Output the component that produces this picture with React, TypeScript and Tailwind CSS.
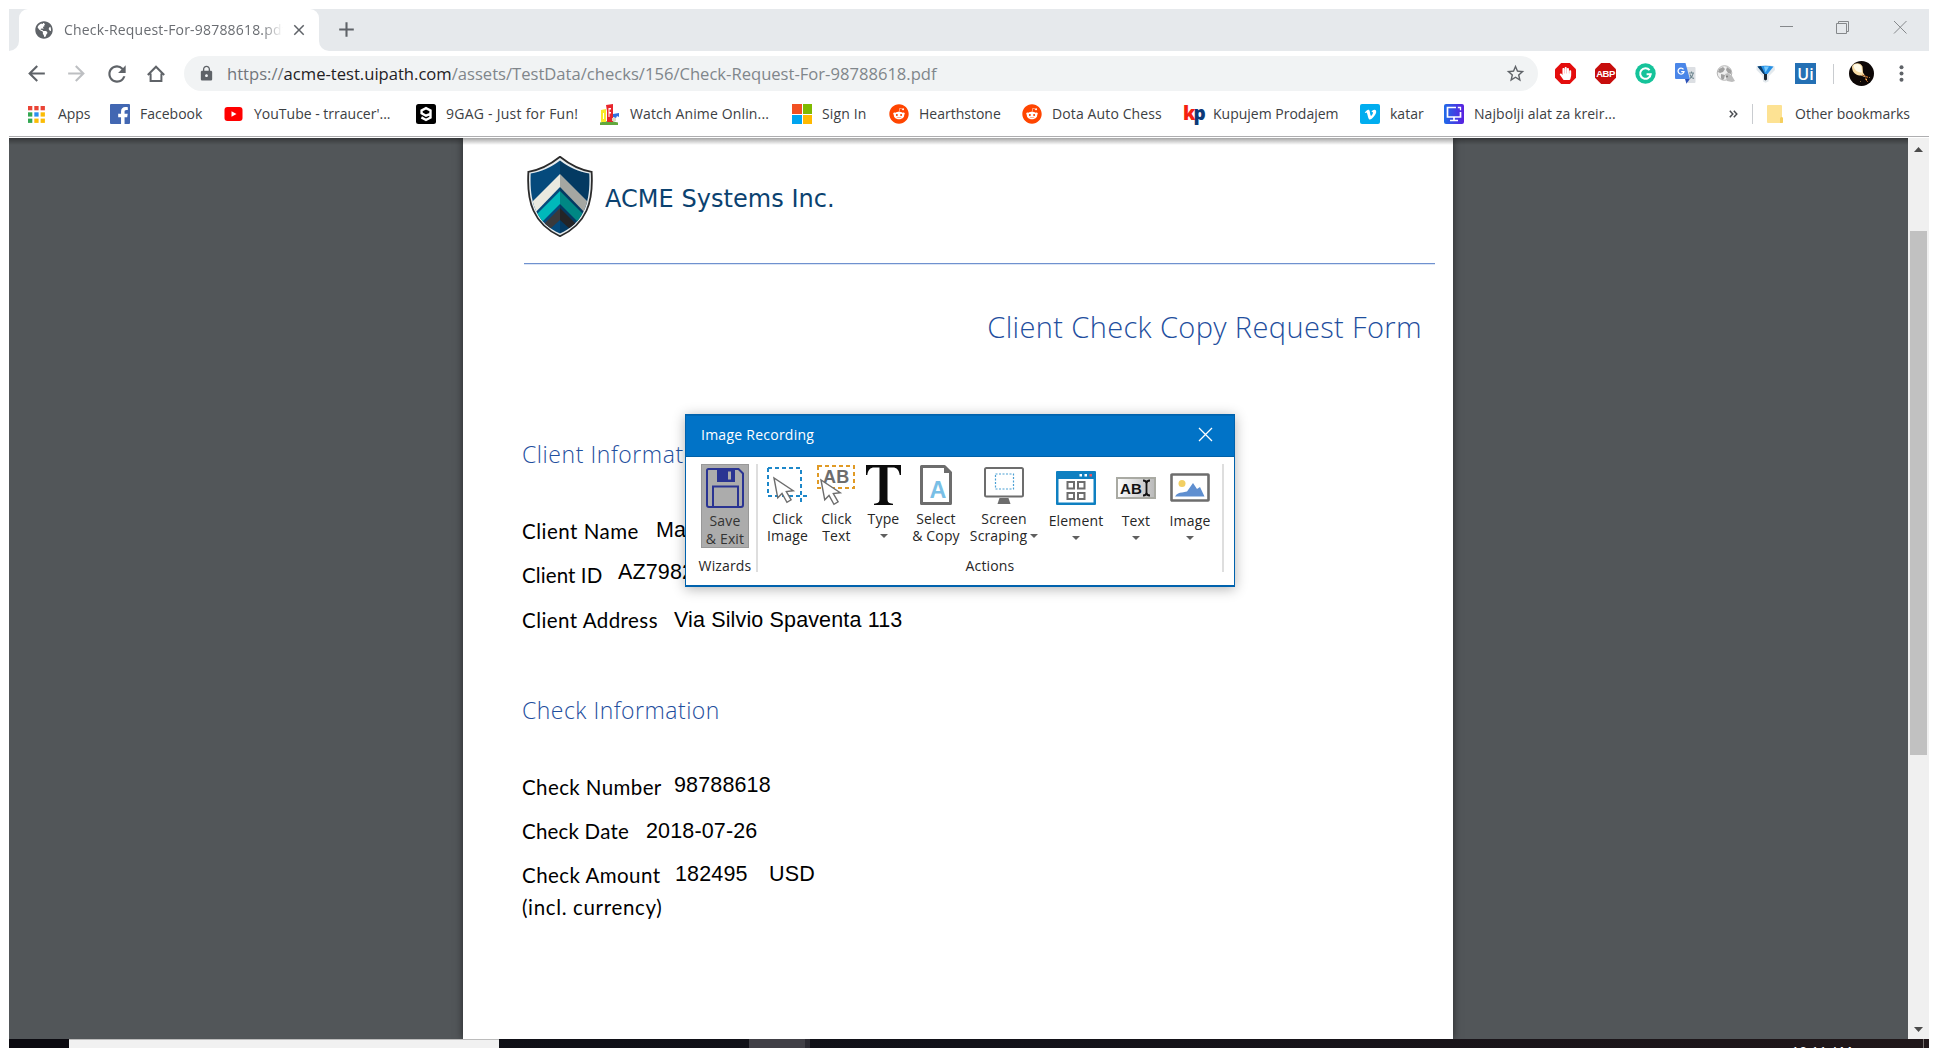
import type { ReactNode } from 'react';
import { MdAdd, MdArrowBack, MdArrowForward, MdClose, MdLock, MdRefresh, MdStarBorder } from 'react-icons/md';
import { FaFacebookF, FaGlobeAmericas, FaHandPaper, FaReddit, FaVimeoV } from 'react-icons/fa';

/* ---------- Tab strip ---------- */

function TabStrip() {
  return (
    <div className="flex h-[42px] shrink-0 bg-[#e6e9ec]">
      <div className="w-[10px] bg-white">
        <div className="h-full rounded-br-[10px] bg-[#e6e9ec]" />
      </div>
      <div className="flex w-[300px] items-center rounded-t-[9px] bg-white pb-px pl-[16px] text-[14px] tracking-[0.190px] text-[#6a6d72]">
        <span className="flex w-[29px]">
          <FaGlobeAmericas className="h-[18px] w-[18px] text-[#5f6368]" />
        </span>
        <span className="w-[219px] overflow-hidden pb-px whitespace-nowrap [mask-image:linear-gradient(to_right,black_90%,transparent)]">
          Check-Request-For-98788618.pdf
        </span>
        <MdClose className="ml-[7px] h-[18px] w-[18px] text-[#5f6368]" />
      </div>
      <div className="w-[10px] bg-white">
        <div className="h-full rounded-bl-[10px] bg-[#e6e9ec]" />
      </div>
      <div className="flex w-[35px] items-center justify-center pb-px">
        <MdAdd className="h-[25px] w-[25px] text-[#5f6368]" />
      </div>
      <svg className="mt-[11px] mr-[22px] ml-auto h-[15px] w-[128px]" viewBox="0 0 128 15" fill="none" stroke="#85888b" strokeWidth="1">
        <path d="M1 6.500h13" />
        <path d="M57.500 3.500h10v10h-10zM59.500 3.500v-2h10v10h-2" />
        <path d="M115 1l12.500 12.500M127.500 1L115 13.500" />
      </svg>
    </div>
  );
}

/* ---------- Address bar ---------- */

const octagon = 'M6.200 0h8.600L21 6.200v8.600L14.800 21H6.200L0 14.800V6.200z';

function Extensions() {
  return (
    <div className="flex items-center">
      <span className="relative flex h-[21px] w-[21px] items-center justify-center">
        <svg className="absolute inset-0" width="21" height="21" viewBox="0 0 21 21">
          <path d={octagon} fill="#e40d0d" />
        </svg>
        <FaHandPaper className="relative h-[13px] w-[13px] text-white" />
      </span>
      <span className="relative ml-[19px] flex h-[21px] w-[21px] items-center justify-center">
        <svg className="absolute inset-0" width="21" height="21" viewBox="0 0 21 21">
          <path d={octagon} fill="#c70d0c" />
        </svg>
        <span className="relative font-['Liberation_Sans'] text-[9.500px] leading-none font-bold tracking-[-0.500px] text-white">ABP</span>
      </span>
      <svg className="ml-[19px]" width="21" height="21" viewBox="0 0 21 21">
        <circle cx="10.500" cy="10.500" r="10.200" fill="#15c39a" />
        <path d="M14.600 7.200A5.300 5.300 0 1 0 15.700 11.300H11.600" fill="none" stroke="#fff" strokeWidth="2" />
        <path d="M15.900 10.300v4.200l-2-1.400z" fill="#fff" />
      </svg>
      <svg className="ml-[19px]" width="21" height="21" viewBox="0 0 21 21">
        <path d="M8 4h11.500a1 1 0 0 1 1 1v14a1 1 0 0 1-1 1H13z" fill="#dcdfe3" />
        <path d="M14 10h5M16.500 8.500V10M18.300 10c-.5 2.500-1.800 4.500-3.500 5.500M15 11.500c.6 2 2 3.500 4 4" fill="none" stroke="#6f8790" strokeWidth="1.100" />
        <path d="M1 0h9.500l4.300 16H1a1 1 0 0 1-1-1V1a1 1 0 0 1 1-1z" fill="#4a86e8" />
        <path d="M10 16h4.800l-3.300 4.800z" fill="#2b50b8" />
        <path d="M8.500 6.300A3 3 0 1 0 9 8.600H6.200" fill="none" stroke="#fff" strokeWidth="1.300" />
      </svg>
      <svg className="ml-[20px]" width="20" height="18" viewBox="0 0 20 18">
        <circle cx="8.500" cy="8" r="7.300" fill="#efefef" stroke="#b5b5b5" />
        <path d="M3 4l4-2 2 2-2 3-3 1-2-1zM5 9l4 1-1 4-2 1-1-2zM11 2l4 3v4l-3-1-2-3z" fill="#a0a0a0" />
        <path d="M9 9l3-1 4 3 3 5-3 1-5-1z" fill="#bdbdbd" />
        <circle cx="11" cy="11.500" r="1.100" fill="#808080" />
      </svg>
      <svg className="ml-[20px]" width="20" height="19" viewBox="0 0 20 19">
        <path d="M.5 2.500Q9.500 0 18.500 2.500l.5 3.500-6 6-.5 5.500-3 1.200-2.500-1.200-.5-5.500-6-6z" fill="#e3e9ed" />
        <path d="M1.500 2.500Q9.500 1 17.500 2.500l-6 7.500h-4z" fill="#2590e6" />
        <path d="M1.500 2.500l6 7.500H9L5 2z" fill="#0d3b66" />
        <path d="M8 10h3v5.500l-1.500 1L8 15.500z" fill="#1a2733" />
        <path d="M8 2.500h5l-3.500 6z" fill="#79ccfd" />
      </svg>
      <span className="ml-[19px] flex h-[21px] w-[21px] items-center justify-center bg-[#2470b4] text-[16px] leading-none font-semibold text-white">
        Ui
      </span>
    </div>
  );
}

function AddressBar() {
  return (
    <div className="flex h-[45px] shrink-0 items-center bg-white pl-[15px] text-[#5f6368]">
      <MdArrowBack className="h-[25px] w-[25px]" />
      <MdArrowForward className="ml-[15px] h-[25px] w-[25px] text-[#bdbfc2]" />
      <MdRefresh className="ml-[15px] h-[26px] w-[26px]" />
      <svg className="ml-[17px]" width="18" height="18" viewBox="0 0 18 18" fill="none" stroke="#5f6368" strokeWidth="2">
        <path d="M.8 10L9 1.700 17.200 10M3.600 8.500V16h10.800V8.500" />
      </svg>
      <div className="ml-[19px] flex h-[35px] w-[1354px] items-center rounded-full bg-[#f1f3f4] pl-[14px]">
        <MdLock className="h-[17px] w-[17px]" />
        <p className="ml-[12px] text-[16.600px] leading-[24px] whitespace-nowrap text-[#80868b]">
          <span className="text-[#72767b]">https://</span>
          <span className="text-[#1f2124]">acme-test.uipath.com</span>/assets/TestData/checks/156/Check-Request-For-98788618.pdf
        </p>
        <MdStarBorder className="mr-[12px] ml-auto h-[21px] w-[21px]" />
      </div>
      <div className="ml-[17px]">
        <Extensions />
      </div>
      <div className="ml-[17px] h-[20px] w-px bg-[#c9ccd0]" />
      <svg className="ml-[15px]" width="25" height="25" viewBox="0 0 25 25">
        <circle cx="12.500" cy="12.500" r="12.500" fill="#0d0706" />
        <path d="M3.500 4.500C6 1 12 1.500 13.500 5.500l.5 6 3 5-5-2c-4 0-7.500-2-8.500-5.500-.4-2-.8-3 0-4.500z" fill="#f7dba4" />
        <path d="M4.500 4.500c3-2.500 7-1.500 8 2l.5 5c-4 0-7-2-8-5z" fill="#fffbe9" />
        <path d="M13 14l6 2-3 2 3 3" fill="none" stroke="#a35a20" strokeWidth="1" />
        <path d="M17 18l1 1M20 16l.6.6M11 20l.5.500" stroke="#f3c46b" />
      </svg>
      <svg className="ml-[25px]" width="5" height="17" viewBox="0 0 5 17" fill="#5f6368">
        <circle cx="2.500" cy="2.200" r="2" />
        <circle cx="2.500" cy="8.500" r="2" />
        <circle cx="2.500" cy="14.800" r="2" />
      </svg>
    </div>
  );
}

/* ---------- Bookmarks bar ---------- */

function Bookmark({ icon, box, children }: { icon: ReactNode; box: string; children: ReactNode }) {
  return (
    <div className={`flex shrink-0 items-center ${box}`}>
      <span className="flex w-[30px] shrink-0">{icon}</span>
      <span className="whitespace-nowrap">{children}</span>
    </div>
  );
}

const appColors = ['#ea4335', '#ea4335', '#ea4335', '#34a853', '#2a8ff0', '#fbbc05', '#34a853', '#fbbc05', '#fbbc05'];

function AppsIcon() {
  return (
    <svg width="17" height="17" viewBox="0 0 17 17">
      {appColors.map((c, i) => (
        <rect key={i} x={(i % 3) * 6.300} y={Math.floor(i / 3) * 6.300} width="4.300" height="4.300" fill={c} />
      ))}
    </svg>
  );
}

function RedditIcon() {
  return <FaReddit className="h-[20px] w-[20px] text-[#ff4500]" />;
}

function BookmarksBar() {
  return (
    <div className="flex h-[40px] shrink-0 items-center bg-white pb-[4px] pl-[19px] text-[14px] leading-[20px] text-[#3c4043]">
      <Bookmark box="w-[82px] tracking-[-0.100px]" icon={<AppsIcon />}>Apps</Bookmark>
      <Bookmark
        box="w-[115px]"
        icon={
          <span className="flex h-[20px] w-[20px] items-end justify-end rounded-[1px] bg-[#4267b2]">
            <FaFacebookF className="mr-px -mb-px h-[18px] w-[12px] text-white" />
          </span>
        }
      >
        Facebook
      </Bookmark>
      <Bookmark
        box="w-[192px] -ml-px"
        icon={
          <svg width="19" height="14" viewBox="0 0 19 14">
            <rect x=".5" width="18" height="14" rx="3" fill="#f00" />
            <path d="M7.500 4.200l5 2.800-5 2.800z" fill="#fff" />
          </svg>
        }
      >
        YouTube - trraucer'...
      </Bookmark>
      <Bookmark
        box="w-[184px] tracking-[0.250px]"
        icon={
          <svg width="20" height="20" viewBox="0 0 20 20">
            <rect width="20" height="20" rx="2.500" fill="#000" />
            <path d="M14.500 9.800L10 11.700 5.600 9.300V6.400L10 4.200l4.500 2.200v7.200L10 16l-4.600-2.600" fill="none" stroke="#fff" strokeWidth="2.400" />
            <path d="M10 6.800l1.700.9-1.700.9-1.700-.9z" fill="#000" />
          </svg>
        }
      >
        9GAG - Just for Fun!
      </Bookmark>
      <Bookmark
        box="w-[192px] tracking-[0.140px]"
        icon={
          <svg width="20" height="21" viewBox="0 0 20 21">
            <path d="M0 18.500q9-3 18 0V21H0z" fill="#62a83c" />
            <path d="M1 6l5-1v13H1z" fill="#f8ea2a" />
            <path d="M3 9h1v6H3z" fill="#fff" />
            <path d="M6 1l7-1v18H7V7z" fill="#e8262c" />
            <path d="M8.500 4H11v1.500H9.500V8H11v1.500H9.500V13h-1z" fill="#fff" />
            <path d="M13 10l6-1v4l-2-1-1 2-3-1z" fill="#2f6fdf" />
            <path d="M12 14h4v3h-4z" fill="#ded9c4" />
          </svg>
        }
      >
        Watch Anime Onlin...
      </Bookmark>
      <Bookmark
        box="w-[97px] tracking-[0.150px]"
        icon={
          <span className="grid h-[20px] w-[20px] grid-cols-2 gap-px">
            <i className="bg-[#f25022]" />
            <i className="bg-[#7fba00]" />
            <i className="bg-[#00a4ef]" />
            <i className="bg-[#ffb900]" />
          </span>
        }
      >
        Sign In
      </Bookmark>
      <Bookmark box="w-[133px]" icon={<RedditIcon />}>Hearthstone</Bookmark>
      <Bookmark box="w-[161px] tracking-[0.120px]" icon={<RedditIcon />}>Dota Auto Chess</Bookmark>
      <Bookmark
        box="w-[177px]"
        icon={
          <span className="flex h-[20px] items-center pb-[2px] font-['Open_Sans'] text-[19px] leading-none font-extrabold tracking-[-2px]">
            <span className="text-[#f5210f]">k</span>
            <span className="text-[#0d3a78]">p</span>
          </span>
        }
      >
        Kupujem Prodajem
      </Bookmark>
      <Bookmark
        box="w-[84px]"
        icon={
          <span className="flex h-[20px] w-[20px] items-center justify-center rounded-[2px] bg-[#00adef]">
            <FaVimeoV className="h-[13px] w-[13px] text-white" />
          </span>
        }
      >
        katar
      </Bookmark>
      <Bookmark
        box="w-[285px] tracking-[0.070px]"
        icon={
          <svg width="20" height="20" viewBox="0 0 20 20">
            <defs>
              <linearGradient id="screen-app" x1="0" x2="1">
                <stop offset="0" stopColor="#1f6be8" />
                <stop offset="1" stopColor="#5a20e0" />
              </linearGradient>
            </defs>
            <rect width="20" height="20" rx="2" fill="url(#screen-app)" />
            <path d="M12 3.500H3.500V13h13V8M10 13v3M6 16.500h8" fill="none" stroke="#fff" strokeWidth="1.700" />
            <path d="M13.800 3.500h2.700v2.700" fill="none" stroke="#fff" strokeWidth="1.300" />
          </svg>
        }
      >
        Najbolji alat za kreir...
      </Bookmark>
      <svg width="9" height="8" viewBox="0 0 9 8" fill="none" stroke="#4a4d51" strokeWidth="1.500">
        <path d="M.8.800L3.800 4l-3 3.200M4.800.800L7.800 4l-3 3.200" />
      </svg>
      <div className="ml-[14px] h-[20px] w-px bg-[#c9ccd0]" />
      <svg className="ml-[14px]" width="16" height="18" viewBox="0 0 16 18">
        <path d="M1 0h13a1 1 0 0 1 1 1v11l1 1.500V17a1 1 0 0 1-1 1H1a1 1 0 0 1-1-1V1a1 1 0 0 1 1-1z" fill="#fde293" />
        <path d="M15 12c-2 0-2 1-2 2.500V18h2a1 1 0 0 0 1-1v-4z" fill="#f5cf5e" />
      </svg>
      <span className="ml-[12px] whitespace-nowrap">Other bookmarks</span>
    </div>
  );
}

/* ---------- PDF page ---------- */

function ShieldLogo() {
  return (
    <svg width="66" height="81" viewBox="0 0 66 81">
      <defs>
        <clipPath id="shield-inner">
          <path d="M33 4.500C42 11.500 52 16 62.300 17.500 63.500 45 58 66 33 77.500 8 66 2.500 45 3.700 17.500 14 16 24 11.500 33 4.500z" />
        </clipPath>
      </defs>
      <path d="M33 .8C42 8 52 14 64.600 15.800 66.500 46 59.500 68 33 80.200 6.500 68-.5 46 1.400 15.800 14 14 24 8 33 .8z" fill="#e6ecef" stroke="#2b2b2b" strokeWidth="1.800" />
      <g clipPath="url(#shield-inner)">
        <path d="M0 0h33v81H0z" fill="#054a7c" />
        <path d="M33 0h33v81H33z" fill="#043a62" />
        <path d="M33 18v13L0 65V51z" fill="#e9e9df" />
        <path d="M33 18v13l33 34V51z" fill="#a5a7a2" />
        <path d="M33 35v13L0 81V68z" fill="#00b8bb" />
        <path d="M33 35v13l33 33V68z" fill="#008784" />
        <path d="M33 52v12L12 83V73z" fill="#3a3a3c" />
        <path d="M33 52v12l21 19V73z" fill="#242426" />
      </g>
    </svg>
  );
}

function Field({ label, labelBox, raise, children }: { label: string; labelBox: string; raise: string; children: ReactNode }) {
  return (
    <div className="flex h-[44.300px] whitespace-nowrap">
      <span className={`font-['Lato'] text-[20.500px] leading-[26px] ${labelBox}`}>{label}</span>
      <span className={`font-['Liberation_Sans'] text-[21.500px] leading-[26px] tracking-[0.140px] ${raise}`}>{children}</span>
    </div>
  );
}

function PdfPage() {
  return (
    <div className="flex w-[990px] shrink-0 flex-col bg-white pr-[18px] pl-[59px] text-black shadow-[0_0_8px_rgba(0,0,0,0.550)]">
      <div className="mt-[18px] ml-[5px] flex h-[81px]">
        <ShieldLogo />
        <span className="mt-[28px] ml-[12px] font-['DejaVu_Sans'] text-[24px] leading-[30px] tracking-[0.040px] whitespace-nowrap text-[#0b4270]">
          ACME Systems Inc.
        </span>
      </div>
      <div className="mt-[26px] ml-[2px] h-[2px] border-t border-[#6f91cf] bg-[#dbe5f5]" />
      <h1 className="mt-[42px] mr-[13px] text-right text-[29px] leading-[40px] font-light tracking-[0.370px] text-[#1f4f9e]">
        Client Check Copy Request Form
      </h1>
      <h2 className="mt-[92px] text-[23px] leading-[30px] font-light tracking-[0.550px] text-[#1f4f9e]">
        Client Information
      </h2>
      <div className="mt-[49px]">
        <Field label="Client Name" labelBox="w-[134px] tracking-[0.500px]" raise="-mt-px">Mario</Field>
        <Field label="Client ID" labelBox="w-[96px] tracking-[0.100px]" raise="-mt-[3px]">AZ7982</Field>
        <Field label="Client Address" labelBox="w-[152px] tracking-[0.450px]" raise="mt-0">Via Silvio Spaventa 113</Field>
      </div>
      <h2 className="mt-[44px] text-[23px] leading-[30px] font-light tracking-[0.480px] text-[#1f4f9e]">
        Check Information
      </h2>
      <div className="mt-[49px]">
        <Field label="Check Number" labelBox="w-[152px] tracking-[0.400px]" raise="-mt-[2px]">98788618</Field>
        <Field label="Check Date" labelBox="w-[124px] tracking-[0.200px]" raise="mt-0">2018-07-26</Field>
        <Field label="Check Amount" labelBox="w-[153px] tracking-[0.450px]" raise="-mt-px">
          <span className="inline-block w-[94px]">182495</span>USD
        </Field>
        <p className="-mt-[13px] font-['Lato'] text-[20.500px] leading-[26px] tracking-[0.650px]">(incl. currency)</p>
      </div>
    </div>
  );
}

/* ---------- Image Recording dialog ---------- */

const cursorPath = 'M0 0l3.500 18.500 4-4 4.600 8.200 3.900-2.300-4.500-7.700 6.500-.8z';

function DownArrow() {
  return <span className="h-0 w-0 border-x-[4px] border-t-[4px] border-x-transparent border-t-[#5f5f5f]" />;
}

function Tool({ box, icon, iconPad, lines, arrow, low }: { box: string; icon: ReactNode; iconPad: string; lines: string[]; arrow?: 'below' | 'side'; low?: boolean }) {
  return (
    <div className={`flex shrink-0 flex-col items-center leading-[17px] whitespace-nowrap ${box}`}>
      <div className={`flex justify-center ${low ? 'h-[48px]' : 'h-[46px]'} ${iconPad}`}>{icon}</div>
      <span>{lines[0]}</span>
      {arrow === 'below' ? (
        <span className="mt-[7px] flex">
          <DownArrow />
        </span>
      ) : (
        <span className="flex items-center gap-[3px]">
          {lines[1]}
          {arrow === 'side' && <DownArrow />}
        </span>
      )}
    </div>
  );
}

function RecordingDialog() {
  return (
    <div className="absolute top-[276px] left-[676px] flex h-[173px] w-[550px] flex-col border border-b-2 border-[#0062ad] bg-white text-[14px] tracking-[0.150px] text-[#262626] shadow-[0_2px_12px_rgba(0,0,0,0.300)]">
      <div className="flex h-[42px] shrink-0 items-center justify-between border-t border-b border-t-[#0068b5] border-b-[#0061a8] bg-[#0173c7] pr-[21px] pl-[15px] tracking-[0.250px] text-white">
        <span className="-mt-[3px]">Image Recording</span>
        <svg className="-mt-[3px]" width="15" height="15" viewBox="0 0 15 15" stroke="#fff" strokeWidth="1.300">
          <path d="M1 1l13 13M14 1L1 14" />
        </svg>
      </div>
      <div className="flex pt-[7px]">
        <div className="flex w-[70px] flex-col items-center pl-[8px]">
          <div className="flex h-[84px] w-[48px] flex-col items-center border border-[#989898] bg-[#acacac] pt-[3px] leading-[18px] whitespace-nowrap text-[#333]">
            <svg className="shrink-0" width="38" height="40" viewBox="0 0 38 40">
              <path d="M2.500 1h30L37 5.500V37a2 2 0 0 1-2 2H3a2 2 0 0 1-2-2V2.500A1.500 1.500 0 0 1 2.500 1z" fill="none" stroke="#2a3492" strokeWidth="2" />
              <path d="M11 1h18v13H11z" fill="#2a3492" />
              <path d="M22 3.500h3v8h-3z" fill="#acacac" />
              <path d="M7 39V18.500h25V39" fill="none" stroke="#2a3492" strokeWidth="2" />
            </svg>
            <span className="mt-[4px]">Save</span>
            <span>&amp; Exit</span>
          </div>
          <span className="mt-[9px] leading-[17px]">Wizards</span>
        </div>
        <div className="h-[108px] w-[2px] bg-[#dedede]" />
        <div className="flex h-[110px] w-[464px] flex-col items-center">
          <div className="flex w-full pl-[5px]">
            <Tool
              box="w-[49px]"
              iconPad="pt-[3px]"
              lines={['Click', 'Image']}
              icon={
                <svg width="41" height="39" viewBox="0 0 41 39">
                  <path d="M1 1h33v37M1 1v28h40" fill="none" stroke="#1d87c9" strokeWidth="2" strokeDasharray="4 3" />
                  <path d={cursorPath} transform="translate(7 11) scale(1.070)" fill="#fff" stroke="#6d6d6d" strokeWidth="1.300" />
                </svg>
              }
            />
            <Tool
              box="w-[49px]"
              iconPad="pt-px"
              lines={['Click', 'Text']}
              icon={
                <svg width="40" height="41" viewBox="0 0 40 41">
                  <rect x="1" y="1" width="36" height="22" fill="none" stroke="#e09a25" strokeWidth="2" strokeDasharray="4 3" />
                  <text x="6" y="18" fontFamily="Liberation Sans" fontWeight="700" fontSize="18" fill="#6d6d6d">AB</text>
                  <path d={cursorPath} transform="translate(4 15) scale(1.070)" fill="#fff" stroke="#6d6d6d" strokeWidth="1.300" />
                </svg>
              }
            />
            <Tool
              box="w-[45px]"
              iconPad="pt-px"
              arrow="below"
              lines={['Type']}
              icon={
                <svg width="35" height="41" viewBox="0 0 35 41">
                  <path d="M0 0h35v10h-1.300C33 5 31 2.500 26.500 2.500H21.500V34c0 3.500 1.500 4.500 5.500 4.700V40H8v-1.300c4-.2 5.500-1.200 5.500-4.700V2.500H8.500C4 2.500 2 5 1.300 10H0z" fill="#0b0b0b" />
                </svg>
              }
            />
            <Tool
              box="w-[60px]"
              iconPad="pt-px"
              lines={['Select', '& Copy']}
              icon={
                <svg width="32" height="41" viewBox="0 0 32 41">
                  <path d="M1.500 1.500h23l6 6v31h-29z" fill="#fff" stroke="#6d6d6d" strokeWidth="3" strokeLinejoin="round" />
                  <path d="M24 1v7h7z" fill="#6d6d6d" />
                  <text x="9.500" y="33" fontFamily="Liberation Sans" fontWeight="700" fontSize="24" textLength="17" lengthAdjust="spacingAndGlyphs" fill="#79bfe6">A</text>
                </svg>
              }
            />
            <Tool
              box="w-[76px]"
              iconPad="pt-[3px]"
              arrow="side"
              lines={['Screen', 'Scraping']}
              icon={
                <svg width="40" height="38" viewBox="0 0 40 38">
                  <rect x="1" y="1" width="38" height="28.500" rx="1.500" fill="#fff" stroke="#6d6d6d" strokeWidth="2" />
                  <path d="M15.500 31h9l2 6h-13z" fill="#6d6d6d" />
                  <rect x="11.500" y="7" width="18" height="15" fill="none" stroke="#4a9fd4" strokeWidth="1.200" strokeDasharray="2 1.500" />
                </svg>
              }
            />
            <Tool
              box="w-[68px]"
              iconPad="pt-[7px]"
              arrow="below"
              low
              lines={['Element']}
              icon={
                <svg width="40" height="34" viewBox="0 0 40 34">
                  <rect width="40" height="34" rx="1" fill="#0f80c1" />
                  <path d="M2.500 8h35v23.500h-35z" fill="#fff" />
                  <path d="M23.500 3h2.500v2.500h-2.500zM28.500 3H31v2.500h-2.500z" fill="#fff" />
                  <path d="M33.500 3H36v2.500h-2.500z" fill="#f0545c" />
                  <path d="M11.500 11h6.500v6.500h-6.500zM22 11h6.500v6.500H22zM11.500 22H18v6h-6.500zM22 22h6.500v6H22z" fill="#fff" stroke="#6d6d6d" strokeWidth="2" />
                </svg>
              }
            />
            <Tool
              box="w-[52px]"
              iconPad="pt-[13px]"
              arrow="below"
              low
              lines={['Text']}
              icon={
                <svg width="40" height="22" viewBox="0 0 40 22">
                  <defs>
                    <linearGradient id="text-field" x1="0" x2="1">
                      <stop offset="0" stopColor="#fff" />
                      <stop offset="1" stopColor="#b9b9b9" />
                    </linearGradient>
                  </defs>
                  <rect x="1" y="1" width="38" height="20" fill="url(#text-field)" stroke="#a9aaa3" strokeWidth="2" />
                  <text x="4" y="16.500" fontFamily="Liberation Sans" fontWeight="700" fontSize="15" fill="#111">AB</text>
                  <path d="M27 3.500q3.500 0 3.500 3v9q0 3-3.500 3M34 3.500q-3.500 0-3.500 3v9q0 3 3.500 3" fill="none" stroke="#111" strokeWidth="1.800" />
                </svg>
              }
            />
            <Tool
              box="w-[56px]"
              iconPad="pt-[9px]"
              arrow="below"
              low
              lines={['Image']}
              icon={
                <svg width="40" height="29" viewBox="0 0 40 29">
                  <rect x="1.500" y="1.500" width="37" height="26" rx=".5" fill="#fff" stroke="#6d6d6d" strokeWidth="2.600" />
                  <circle cx="12" cy="10.500" r="3.500" fill="#f2cf63" />
                  <path d="M5 23.500c2-3 4-4 7-4 2 0 3-1 5-1l6-8.500 4 6 3-2 4.500 9.500z" fill="#5f8fd0" />
                </svg>
              }
            />
          </div>
          <span className="mt-auto leading-[17px]">Actions</span>
        </div>
        <div className="h-[108px] w-[2px] bg-[#dedede]" />
      </div>
    </div>
  );
}

/* ---------- Viewer ---------- */

function Scrollbar() {
  return (
    <div className="flex w-[21px] shrink-0 flex-col items-center bg-[#f0f0f0]">
      <svg className="mt-[9px]" width="9" height="5" viewBox="0 0 9 5">
        <path d="M0 5L4.500 0 9 5z" fill="#4b4b4b" />
      </svg>
      <div className="mt-[79px] h-[524px] w-[17px] bg-[#c1c1c1]" />
      <svg className="mt-auto mb-[7px]" width="9" height="5" viewBox="0 0 9 5">
        <path d="M0 0h9L4.500 5z" fill="#4b4b4b" />
      </svg>
    </div>
  );
}

function Viewer() {
  return (
    <div className="relative flex h-[901px] shrink-0">
      <div className="flex min-w-0 flex-1 overflow-hidden bg-[#525659] pl-[454px]">
        <PdfPage />
      </div>
      <Scrollbar />
      <div className="absolute inset-x-0 top-0 mr-[21px] h-[7px] bg-gradient-to-b from-black/35 to-transparent" />
      <RecordingDialog />
    </div>
  );
}

function Taskbar() {
  return (
    <div className="flex h-[9px] shrink-0 overflow-hidden bg-gradient-to-r from-[#0d0e14] via-[#121219] to-[#20171a]">
      <div className="w-[60px] bg-[#0b0a10]" />
      <div className="w-[430px] border-t border-[#bcbcbc] bg-[#f1f1f1]" />
      <div className="ml-[250px] w-[56px] bg-[#414046]" />
      <div className="w-[5px] bg-[#2b2a31]" />
      <span className="mt-[3px] ml-auto text-[14px] leading-[20px] whitespace-nowrap text-white">10:11 AM</span>
      <div className="mr-[5px] ml-[71px] w-px bg-[#76706f]" />
    </div>
  );
}

export default function App() {
  return (
    <div className="h-[1048px] w-[1938px] overflow-hidden bg-white px-[9px] pt-[9px] font-['Open_Sans',sans-serif]">
      <div className="flex flex-col">
        <TabStrip />
        <AddressBar />
        <BookmarksBar />
        <div className="h-[2px] shrink-0 border-t border-[#aeaeb0] bg-white" />
        <Viewer />
        <Taskbar />
      </div>
    </div>
  );
}
